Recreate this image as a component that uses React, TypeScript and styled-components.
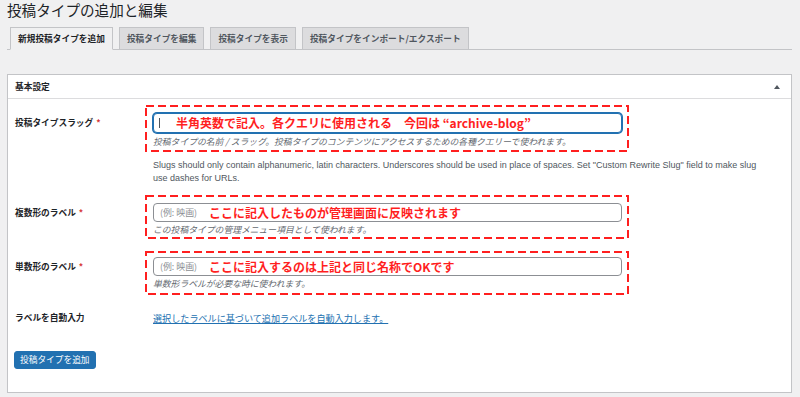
import React from "react";
import styled, { createGlobalStyle } from "styled-components";

const Global = createGlobalStyle`
  html, body { margin: 0; padding: 0; background: #f0f0f1; }
  body {
    font-family: "Liberation Sans", "Noto Sans CJK JP", sans-serif;
    color: #1d2327;
  }
`;

const JP = `"Noto Sans CJK JP", "Liberation Sans", sans-serif`;

const Page = styled.div`
  padding: 0 8px 0 7px;
  width: 800px;
  box-sizing: border-box;
`;

const Title = styled.h1`
  margin: 0;
  font-family: ${JP};
  font-size: 14.6px;
  font-weight: 400;
  line-height: 19px;
  color: #1d2327;
`;

const TabBar = styled.div`
  margin-top: 8px;
  padding-left: 3px;
  display: flex;
  align-items: flex-end;
  gap: 6px;
  border-bottom: 1px solid #c3c4c7;
  height: 22px;
`;

const Tab = styled.div<{ $active?: boolean }>`
  box-sizing: border-box;
  height: 23px;
  margin-bottom: -1px;
  padding: 0 7px;
  display: flex;
  align-items: center;
  font-family: ${JP};
  font-size: 8.7px;
  font-weight: 700;
  white-space: nowrap;
  border: 1px solid #c3c4c7;
  border-bottom-color: ${(p) => (p.$active ? "#f0f0f1" : "#c3c4c7")};
  background: ${(p) => (p.$active ? "#f0f0f1" : "#dcdcde")};
  color: ${(p) => (p.$active ? "#1d2327" : "#50575e")};
`;

const Panel = styled.div`
  margin-top: 24px;
  background: #fff;
  border: 1px solid #c3c4c7;
  box-shadow: 0 1px 1px rgba(0, 0, 0, 0.04);
`;

const PanelHeader = styled.div`
  height: 23px;
  border-bottom: 1px solid #dcdcde;
  padding: 0 10px 0 7px;
  display: flex;
  align-items: center;
  justify-content: space-between;
  font-family: ${JP};
  font-size: 8.7px;
  font-weight: 700;
`;

const Caret = styled.span`
  width: 0;
  height: 0;
  border-left: 3px solid transparent;
  border-right: 3px solid transparent;
  border-bottom: 4px solid #50575e;
  margin-right: 1px;
`;

const Body = styled.div`
  padding: 6px 7px 23px 7px;
  display: grid;
  grid-template-columns: 130px 1fr;
  align-items: start;
`;

const Label = styled.div<{ $top?: number }>`
  padding-top: ${(p) => p.$top ?? 8}px;
  font-family: ${JP};
  font-size: 8.7px;
  font-weight: 700;
  line-height: 20px;
  color: #1d2327;
  white-space: nowrap;
`;

const Req = styled.span`
  color: #d63638;
  margin-left: 3px;
`;

const Annot = styled.div<{ $pad: string; $mt?: number }>`
  position: relative;
  width: 484px;
  box-sizing: border-box;
  padding: ${(p) => p.$pad};
  margin-top: ${(p) => p.$mt ?? 0}px;
`;

const DashSvg = styled.svg`
  position: absolute;
  inset: 0;
  width: 100%;
  height: 100%;
  pointer-events: none;
  overflow: visible;
`;

const Input = styled.div<{ $focus?: boolean; $h: number }>`
  box-sizing: border-box;
  height: ${(p) => p.$h}px;
  border: 1px solid ${(p) => (p.$focus ? "#2271b1" : "#8c8f94")};
  box-shadow: ${(p) => (p.$focus ? "0 0 0 1px #2271b1" : "none")};
  border-radius: 4px;
  background: #fff;
  display: flex;
  align-items: center;
  padding-left: 6px;
  white-space: nowrap;
  overflow: hidden;
`;

const Cursor = styled.span`
  width: 1px;
  height: 10px;
  background: #50575e;
  margin-left: -1px;
  margin-right: 16px;
`;

const Placeholder = styled.span`
  font-family: ${JP};
  font-size: 8.9px;
  color: #8c8f94;
  margin-right: 12px;
`;

const RedNote = styled.span`
  font-family: ${JP};
  font-size: 12px;
  font-weight: 700;
  color: #ff1f1f;
  line-height: 14px;
`;

const Desc = styled.div<{ $mt?: number }>`
  margin-top: ${(p) => p.$mt ?? 2}px;
  font-family: ${JP};
  font-size: 8.8px;
  font-style: italic;
  line-height: 12px;
  color: #646970;
  white-space: nowrap;
`;

const Note = styled.div`
  grid-column: 2;
  margin: 7px 0 10px 8px;
  font-family: "Liberation Sans", sans-serif;
  font-size: 9px;
  line-height: 13px;
  color: #50575e;
  white-space: nowrap;
`;

const Link = styled.a`
  display: block;
  margin: 16px 0 0 8px;
  font-family: ${JP};
  font-size: 9.1px;
  line-height: 14px;
  color: #2271b1;
  text-decoration: underline;
  white-space: nowrap;
`;

const ButtonRow = styled.div`
  grid-column: 1 / 3;
  margin: 21px 0 0 -1px;
`;

const Button = styled.button`
  height: 18px;
  padding: 0 5px;
  border: 1px solid #2271b1;
  border-radius: 3px;
  background: #2271b1;
  color: #fff;
  font-family: ${JP};
  font-size: 8.7px;
  line-height: 16px;
  cursor: pointer;
`;

const Dashes = () => (
  <DashSvg preserveAspectRatio="none">
    <rect
      x="1"
      y="1"
      width="calc(100% - 2px)"
      height="calc(100% - 2px)"
      fill="none"
      stroke="#ff1f1f"
      strokeWidth="2"
      strokeDasharray="8 4"
    />
  </DashSvg>
);

export default function App() {
  return (
    <>
      <Global />
      <Page>
        <Title>投稿タイプの追加と編集</Title>
        <TabBar>
          <Tab $active>新規投稿タイプを追加</Tab>
          <Tab>投稿タイプを編集</Tab>
          <Tab>投稿タイプを表示</Tab>
          <Tab>投稿タイプをインポート/エクスポート</Tab>
        </TabBar>
        <Panel>
          <PanelHeader>
            <span>基本設定</span>
            <Caret />
          </PanelHeader>
          <Body>
            <Label>
              投稿タイプスラッグ<Req>*</Req>
            </Label>
            <Annot $pad="8px 7px 4px 8px">
              <Dashes />
              <Input $focus $h={20}>
                <Cursor />
                <RedNote>半角英数で記入。各クエリに使用される　今回は “archive-blog”</RedNote>
              </Input>
              <Desc $mt={3}>
                投稿タイプの名前 / スラッグ。投稿タイプのコンテンツにアクセスするための各種クエリーで使われます。
              </Desc>
            </Annot>

            <Note>
              Slugs should only contain alphanumeric, latin characters. Underscores should be used in place of
              spaces. Set "Custom Rewrite Slug" field to make slug
              <br />
              use dashes for URLs.
            </Note>

            <Label>
              複数形のラベル<Req>*</Req>
            </Label>
            <Annot $pad="8px 7px 3px 8px">
              <Dashes />
              <Input $h={19}>
                <Placeholder>(例: 映画)</Placeholder>
                <RedNote>ここに記入したものが管理画面に反映されます</RedNote>
              </Input>
              <Desc>この投稿タイプの管理メニュー項目として使われます。</Desc>
            </Annot>

            <Label $top={18}>
              単数形のラベル<Req>*</Req>
            </Label>
            <Annot $pad="6px 7px 5px 8px" $mt={12}>
              <Dashes />
              <Input $h={19}>
                <Placeholder>(例: 映画)</Placeholder>
                <RedNote>ここに記入するのは上記と同じ名称でOKです</RedNote>
              </Input>
              <Desc>単数形ラベルが必要な時に使われます。</Desc>
            </Annot>

            <Label $top={13}>ラベルを自動入力</Label>
            <Link href="#">選択したラベルに基づいて追加ラベルを自動入力します。</Link>

            <ButtonRow>
              <Button>投稿タイプを追加</Button>
            </ButtonRow>
          </Body>
        </Panel>
      </Page>
    </>
  );
}
